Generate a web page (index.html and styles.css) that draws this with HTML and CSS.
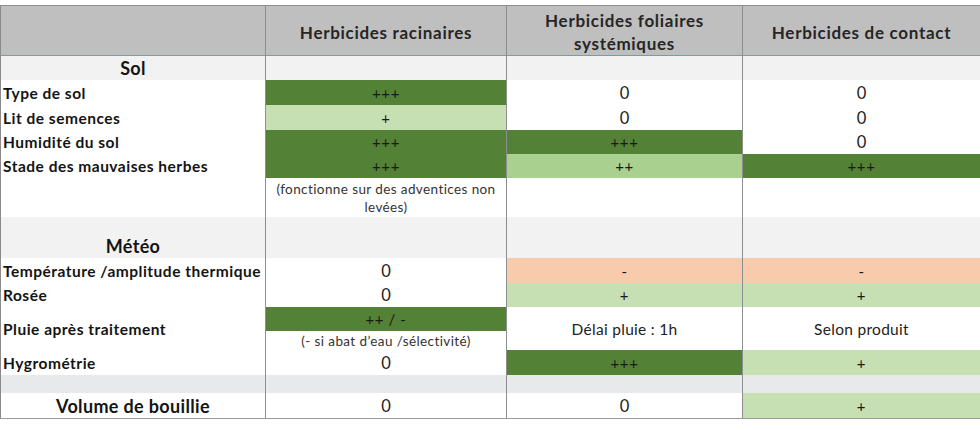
FILE: index.html
```html
<!DOCTYPE html>
<html lang="fr">
<head>
<meta charset="utf-8">
<title>Herbicides</title>
<link rel="stylesheet" href="styles.css">
</head>
<body>
<table class="grid">
  <colgroup>
    <col class="c1"><col class="c2"><col class="c3"><col class="c4">
  </colgroup>
  <thead>
    <tr class="r-head">
      <th class="first"></th>
      <th>Herbicides racinaires</th>
      <th>Herbicides foliaires<br>systémiques</th>
      <th>Herbicides de contact</th>
    </tr>
  </thead>
  <tbody>
    <tr class="r24">
      <td class="first section gr">Sol</td>
      <td class="gr"></td><td class="gr"></td><td class="gr"></td>
    </tr>
    <tr class="r25">
      <td class="first label">Type de sol</td>
      <td class="dg sym">+++</td>
      <td class="num">0</td>
      <td class="num">0</td>
    </tr>
    <tr class="r25">
      <td class="first label">Lit de semences</td>
      <td class="lg sym">+</td>
      <td class="num">0</td>
      <td class="num">0</td>
    </tr>
    <tr class="r24">
      <td class="first label">Humidité du sol</td>
      <td class="dg sym">+++</td>
      <td class="dg sym">+++</td>
      <td class="num">0</td>
    </tr>
    <tr class="r24">
      <td class="first label">Stade des mauvaises herbes</td>
      <td class="dg sym">+++</td>
      <td class="mg sym">++</td>
      <td class="dg sym">+++</td>
    </tr>
    <tr class="r39">
      <td class="first"></td>
      <td class="note">(fonctionne sur des adventices non levées)</td>
      <td></td>
      <td></td>
    </tr>
    <tr class="r40">
      <td class="first section bottom gr">Météo</td>
      <td class="gr"></td><td class="gr"></td><td class="gr"></td>
    </tr>
    <tr class="r25">
      <td class="first label">Température /amplitude thermique</td>
      <td class="num">0</td>
      <td class="or sym">-</td>
      <td class="or sym">-</td>
    </tr>
    <tr class="r24">
      <td class="first label">Rosée</td>
      <td class="num">0</td>
      <td class="lg sym">+</td>
      <td class="lg sym">+</td>
    </tr>
    <tr class="r24">
      <td class="first label" rowspan="2">Pluie après traitement</td>
      <td class="dg sym">++ / -</td>
      <td class="txt" rowspan="2">Délai pluie : 1h</td>
      <td class="txt" rowspan="2">Selon produit</td>
    </tr>
    <tr class="r19">
      <td class="note">(- si abat d’eau /sélectivité)</td>
    </tr>
    <tr class="r25">
      <td class="first label">Hygrométrie</td>
      <td class="num">0</td>
      <td class="dg sym">+++</td>
      <td class="lg sym">+</td>
    </tr>
    <tr class="r18">
      <td class="first bl"></td>
      <td class="bl"></td><td class="bl"></td><td class="bl"></td>
    </tr>
    <tr class="r25 last">
      <td class="first section">Volume de bouillie</td>
      <td class="num">0</td>
      <td class="num">0</td>
      <td class="lg sym">+</td>
    </tr>
  </tbody>
</table>
</body>
</html>
```

FILE: styles.css
```css
html, body {
  margin: 0;
  padding: 0;
  background: #ffffff;
}

body {
  padding-top: 5px;
  font-family: Lato, "Open Sans", "Liberation Sans", sans-serif;
  color: #1c1c1c;
}

.grid {
  width: 980px;
  table-layout: fixed;
  border-collapse: separate;
  border-spacing: 0;
}

.c1 { width: 265px; }
.c2 { width: 241px; }
.c3 { width: 236px; }
.c4 { width: 238px; }

.grid th,
.grid td {
  padding: 0;
  border-left: 1px solid #8e8e8e;
  text-align: center;
  vertical-align: middle;
  overflow: hidden;
}

.grid .first {
  border-left: 1px solid #8a8a8a;
}

.r-head th {
  height: 45px;
  background: #bfbfbf;
  border-top: 1px solid #8e8e8e;
  border-bottom: 1px solid #6fa3a3;
  font-size: 17px;
  letter-spacing: 0.7px;
  font-weight: 700;
  line-height: 23px;
  color: #262626;
  padding-top: 3px;
  box-sizing: border-box;
}

.r18 td { height: 18px; }
.r19 td { height: 19px; }
.r24 td { height: 24px; }
.r25 td { height: 25px; }
.r39 td { height: 39px; }
.r40 td { height: 40px; }

.last td {
  border-bottom: 1px solid #9a9a9a;
}

.label {
  text-align: left !important;
  padding-left: 2px !important;
  font-size: 15.5px;
  letter-spacing: 0.5px;
  font-weight: 700;
  color: #141414;
  white-space: nowrap;
}

.section {
  font-size: 18px;
  letter-spacing: 0.35px;
  font-weight: 700;
  color: #141414;
}

.section.bottom {
  vertical-align: bottom !important;
  padding-bottom: 1px !important;
}

.num {
  font-size: 16.5px;
  color: #222222;
}

.sym {
  font-size: 15px;
  letter-spacing: 0.6px;
  color: #1a1a1a;
}

.txt {
  font-size: 15.5px;
  letter-spacing: 0.3px;
  color: #222222;
}

.note {
  font-size: 13.5px;
  letter-spacing: 0.4px;
  line-height: 18px;
  color: #333333;
  padding: 0 6px !important;
}

.dg { background: #538135; }
.mg { background: #a9d08e; }
.lg { background: #c6e0b4; }
.or { background: #f8cbad; }
.gr { background: #f2f2f2; }
.bl { background: #e7e9eb; }
```
